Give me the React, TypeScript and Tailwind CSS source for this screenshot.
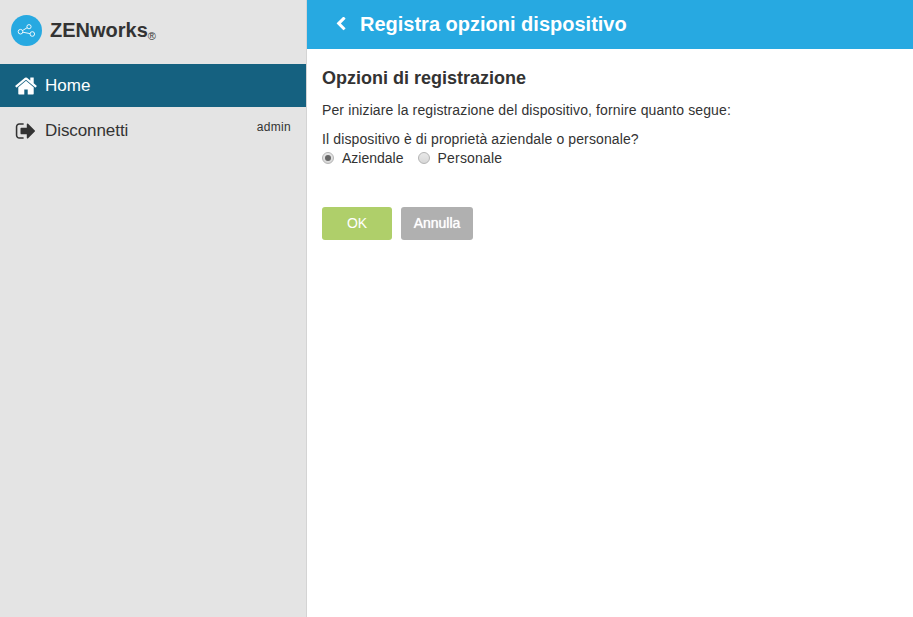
function Radio({ checked }: { checked?: boolean }) {
  return (
    <span className="flex h-[12px] w-[12px] shrink-0 items-center justify-center rounded-full border border-[#b4b4b4] bg-gradient-to-b from-[#e8e8e8] to-[#d8d8d8]">
      {checked && <span className="h-[6px] w-[6px] rounded-full bg-[#666666]" />}
    </span>
  );
}

export default function App() {
  return (
    <div className="flex h-[617px] w-[913px] overflow-hidden bg-white font-['Liberation_Sans',Arial,sans-serif] text-[#333333]">
      <aside className="flex w-[307px] shrink-0 flex-col border-r border-[#d4d4d4] bg-[#e4e4e4]">
        <div className="flex h-[64px] items-start pl-[11px] pt-[15px]">
          <div className="h-[31px] w-[31px] rounded-full bg-[#27a9e1]">
            <svg width="31" height="31" viewBox="0 0 31 31" fill="none" stroke="#ffffff" strokeWidth="0.9">
              <circle cx="9.5" cy="16.7" r="2.3" />
              <circle cx="18" cy="11.7" r="2.1" />
              <circle cx="21.3" cy="19" r="2.3" />
              <path d="M11.6 15.5L16.2 12.7M11.8 17.2L19 18.6" />
            </svg>
          </div>
          <div className="ml-[8px] mt-[3px] flex items-baseline text-[20px] font-bold leading-[24px] text-[#333333]">
            ZENworks<span className="relative top-[3px] text-[11px] font-normal leading-none">®</span>
          </div>
        </div>
        <div className="flex h-[43px] items-center bg-[#156180] pl-[14px] text-white">
          <svg width="24" height="24" viewBox="0 0 1792 1792" fill="currentColor">
            <path d="M1472 992v480q0 26-19 45t-45 19h-384v-384h-256v384h-384q-26 0-45-19t-19-45v-480q0-1 .5-3t.5-3l575-474 575 474q1 2 1 6zm223-69l-62 74q-8 9-21 11h-3q-13 0-21-7l-692-577-692 577q-12 8-24 7-13-2-21-11l-62-74q-8-10-7-23.5t11-21.5l719-599q32-26 76-26t76 26l244 204v-195q0-14 9-23t23-9h192q14 0 23 9t9 23v408l219 182q10 8 11 21.5t-7 23.5z" />
          </svg>
          <span className="ml-[7px] text-[17px]">Home</span>
        </div>
        <div className="flex h-[46px] items-center justify-between pl-[15px] pr-[15px]">
          <div className="flex items-center pt-[1px]">
            <svg width="22" height="22" viewBox="0 0 1792 1792" fill="currentColor">
              <path d="M704 1440q0 4 1 20t.5 26.5-3 23.5-10 19.5-20.5 6.5h-320q-119 0-203.5-84.5t-84.5-203.5v-704q0-119 84.5-203.5t203.5-84.5h320q13 0 22.5 9.5t9.5 22.5q0 4 1 20t.5 26.5-3 23.5-10 19.5-20.5 6.5h-320q-66 0-113 47t-47 113v704q0 66 47 113t113 47h312l11.5 1 11.5 3 8 5.5 7 9 2 13.5zm928-544q0 26-19 45l-544 544q-19 19-45 19t-45-19-19-45v-288h-448q-26 0-45-19t-19-45v-384q0-26 19-45t45-19h448v-288q0-26 19-45t45-19 45 19l544 544q19 19 19 45z" />
            </svg>
            <span className="ml-[8px] text-[17px] tracking-[-0.08px]">Disconnetti</span>
          </div>
          <span className="mb-[6px] text-[12px] leading-[14px] tracking-[0.3px]">admin</span>
        </div>
      </aside>
      <main className="flex min-w-0 flex-1 flex-col">
        <header className="flex h-[49px] items-center bg-[#27a9e1] pb-[2px] pl-[29px] text-white">
          <svg width="10" height="14" viewBox="384 64 1062 1664" fill="currentColor">
            <path d="M1427 301l-531 531 531 531q19 19 19 45t-19 45l-166 166q-19 19-45 19t-45-19l-742-742q-19-19-19-45t19-45l742-742q19-19 45-19t45 19l166 166q19 19 19 45t-19 45z" />
          </svg>
          <h1 className="ml-[14px] text-[20px] font-bold leading-[24px]">Registra opzioni dispositivo</h1>
        </header>
        <div className="flex flex-col px-[15px] pt-[19px]">
          <h2 className="text-[18px] font-bold leading-[20px]">Opzioni di registrazione</h2>
          <p className="mt-[14px] text-[14px] leading-[16px] tracking-[0.12px]">Per iniziare la registrazione del dispositivo, fornire quanto segue:</p>
          <p className="mt-[13px] text-[14px] leading-[16px] tracking-[0.12px]">Il dispositivo è di proprietà aziendale o personale?</p>
          <div className="mt-[3px] flex items-center text-[14px] leading-[16px]">
            <Radio checked />
            <span className="ml-[8px]">Aziendale</span>
            <span className="ml-[14px]"><Radio /></span>
            <span className="ml-[8px] tracking-[0.2px]">Personale</span>
          </div>
          <div className="mt-[41px] flex gap-[9px]">
            <button className="h-[33px] w-[70px] rounded-[3px] bg-[#afcf6a] text-[14px] text-white">OK</button>
            <button className="h-[33px] w-[72px] rounded-[3px] bg-[#b0b0b0] text-[14px] text-white [text-shadow:0_0_1px_#ffffff]">Annulla</button>
          </div>
        </div>
      </main>
    </div>
  );
}
